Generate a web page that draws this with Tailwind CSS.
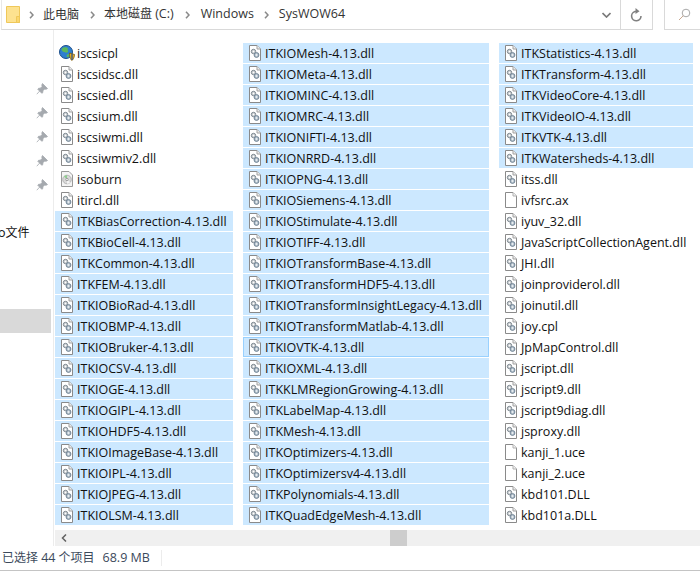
<!DOCTYPE html>
<html><head><meta charset="utf-8"><title>SysWOW64</title>
<script src="https://cdn.jsdelivr.net/npm/@tailwindcss/browser@4"></script>
</head>
<body class="bg-white overflow-hidden">
<svg class="hidden"><defs>
<symbol id="dll" viewBox="0 0 12 16"><path d="M.5.5H8L11.500 4V15.500H.5Z" fill="#fff" stroke="#8a8a8a"/><path d="M8 .5V4H11.500" fill="#eee" stroke="#a0a0a0"/><circle cx="4.500" cy="6.500" r="2.200" fill="#cfd3d6" stroke="#7d8890"/><circle cx="7.500" cy="10" r="2.400" fill="#b9c6d0" stroke="#6f8294"/><circle cx="4.500" cy="6.500" r=".7" fill="#fff"/><circle cx="7.500" cy="10" r=".8" fill="#fff"/></symbol>
<symbol id="blank" viewBox="0 0 12 16"><path d="M.5.500H8L11.500 4V15.500H.5Z" fill="#fff" stroke="#8a8a8a"/><path d="M8 .5V4H11.500" fill="#f2f2f2" stroke="#b0b0b0"/></symbol>
<symbol id="disc" viewBox="0 0 12 16"><path d="M.5.500H8L11.500 4V15.500H.5Z" fill="#f4f4f4" stroke="#9a9a9a"/><circle cx="6" cy="8.500" r="4.300" fill="#d8d8d8" stroke="#b5b5b5"/><path d="M6 8.500 3 5.500A4.300 4.300 0 0 1 6 4.200Z" fill="#8fce8f"/><path d="M6 8.500 9 11.500A4.300 4.300 0 0 1 6 12.800Z" fill="#f4f4f4"/><circle cx="6" cy="8.500" r="1.200" fill="#fff" stroke="#999"/></symbol>
<symbol id="globe" viewBox="0 0 16 16"><circle cx="7" cy="7" r="6.500" fill="#2f7fd0" stroke="#1d4f8a"/><path d="M3 3.500C5 1.500 8 2 9 3.500 8 5 9.500 5.500 9 7 7 8.500 6 7 4.500 7 3 6 2 5 3 3.500ZM8 9.500C10 9 11 10 10 11.500L8 12.500C7.500 11.500 7.500 10.500 8 9.500Z" fill="#5cb85c"/><path d="M10.500 8 15.500 9.500C15.500 13 13.500 15 13 15.500 12 15 10.500 13 10.500 8Z" fill="#f0b429" stroke="#7a5a10" stroke-width=".8"/><path d="M13 8.800V15" stroke="#27508f" stroke-width="1.300"/></symbol>
<symbol id="pin" viewBox="0 0 12 12"><path d="M6.500 .5 11.500 5.500 10 6.300 8.700 6 6.900 7.800 6.800 9.600 5.800 10.300 1.800 6.300 2.600 5.300 4.300 5.200 6.100 3.400 5.800 2ZM3.700 8 .8 11.200" fill="#a5a9ae" stroke="#a5a9ae" stroke-width=".8"/></symbol>
<symbol id="chev" viewBox="0 0 5 8"><path d="M1 .8 4 4 1 7.200" fill="none" stroke="#8a8a8a" stroke-width="1.600"/></symbol>
</defs></svg>
<div class="w-[700px] h-[571px] flex flex-col font-['Open_Sans','Noto_Sans_CJK_SC',sans-serif] text-[12px] text-[#111]">
  <header class="h-[30px] flex shrink-0">
    <div class="w-[620px] h-[30px] ml-px border-b border-r border-l border-l-[#e8e8e8] border-[#d9d9d9] flex items-center pl-[4px]">
      <svg class="w-[14px] h-[17px] mr-[9px]" viewBox="0 0 14 17"><path d="M.5.500H13.500V16.500H.5Z" fill="#fde290" stroke="#efc85a"/><path d="M10.500 10.500H13.500V16.500H10.500Z" fill="#fbd76e" stroke="#efc85a"/></svg>
      <nav class="flex items-center text-[#333]">
        <svg class="w-[5px] h-[8px] mr-[9px]"><use href="#chev"/></svg><span>此电脑</span>
        <svg class="w-[5px] h-[8px] ml-[11px] mr-[9px]"><use href="#chev"/></svg><span>本地磁盘 <span class="text-[12.5px]">(C:)</span></span>
        <svg class="w-[5px] h-[8px] ml-[11px] mr-[11px]"><use href="#chev"/></svg><span class="text-[12.5px]">Windows</span>
        <svg class="w-[5px] h-[8px] ml-[10px] mr-[10px]"><use href="#chev"/></svg><span class="text-[12.5px]">SysWOW64</span>
      </nav>
      <svg class="ml-auto mr-[9px] w-[9px] h-[6px]" viewBox="0 0 9 6"><path d="M.5 1 4.500 5 8.500 1" fill="none" stroke="#7a7a7a" stroke-width="1.700"/></svg>
    </div>
    <div class="w-[32px] h-[30px] border-b border-r border-[#d9d9d9] flex items-center justify-center">
      <svg class="w-[13px] h-[14px]" viewBox="0 0 13 14"><path d="M11 8A4.700 4.700 0 1 1 5 3.500H7" fill="none" stroke="#808080" stroke-width="1.600"/><path d="M5.500 0 9.500 3.300 5.500 6Z" fill="#808080"/></svg>
    </div>
    <div class="w-[11px]"></div>
    <div class="flex-1 h-[30px] border-b border-l border-[#d9d9d9] flex items-center pl-[13px]">
      <svg class="w-[13px] h-[13px]" viewBox="0 0 13 13"><circle cx="8" cy="5" r="3.800" fill="none" stroke="#a8a8a8"/><path d="M5.300 7.700 1 12" stroke="#c9a890"/></svg>
    </div>
  </header>
  <div class="flex flex-1 min-h-0">
    <aside class="w-[54px] shrink-0 border-r border-[#ececec] flex flex-col">
      <div class="flex flex-col items-end gap-[12px] pt-[53px] pr-[5px]">
        <svg class="w-[12px] h-[12px]"><use href="#pin"/></svg>
        <svg class="w-[12px] h-[12px]"><use href="#pin"/></svg>
        <svg class="w-[12px] h-[12px]"><use href="#pin"/></svg>
        <svg class="w-[12px] h-[12px]"><use href="#pin"/></svg>
        <svg class="w-[12px] h-[12px]"><use href="#pin"/></svg>
      </div>
      <div class="mt-[34px] -ml-[2px] whitespace-nowrap leading-[16px]"><span class="text-[12.5px]">o</span>文件</div>
      <div class="mt-[68px] w-[51px] h-[24px] bg-[#d9d9d9]"></div>
    </aside>
    <main class="flex-1 min-w-0 flex flex-col">
      <div class="flex-1 min-h-0 flex gap-[10px] pl-px pt-[13px] text-[12.5px] leading-[22px] overflow-hidden">
        <ul class="w-[178px] flex flex-col gap-px">
          <li class="h-[20px] flex items-start gap-[2px] pl-[4px]"><svg class="mt-[2px] w-[16px] h-[16px]"><use href="#globe"/></svg>iscsicpl</li>
          <li class="h-[20px] flex items-start gap-[4px] pl-[6px]"><svg class="mt-[2px] w-[12px] h-[16px]"><use href="#dll"/></svg>iscsidsc.dll</li>
          <li class="h-[20px] flex items-start gap-[4px] pl-[6px]"><svg class="mt-[2px] w-[12px] h-[16px]"><use href="#dll"/></svg>iscsied.dll</li>
          <li class="h-[20px] flex items-start gap-[4px] pl-[6px]"><svg class="mt-[2px] w-[12px] h-[16px]"><use href="#dll"/></svg>iscsium.dll</li>
          <li class="h-[20px] flex items-start gap-[4px] pl-[6px]"><svg class="mt-[2px] w-[12px] h-[16px]"><use href="#dll"/></svg>iscsiwmi.dll</li>
          <li class="h-[20px] flex items-start gap-[4px] pl-[6px]"><svg class="mt-[2px] w-[12px] h-[16px]"><use href="#dll"/></svg>iscsiwmiv2.dll</li>
          <li class="h-[20px] flex items-start gap-[4px] pl-[6px]"><svg class="mt-[2px] w-[12px] h-[16px]"><use href="#disc"/></svg>isoburn</li>
          <li class="h-[20px] flex items-start gap-[4px] pl-[6px]"><svg class="mt-[2px] w-[12px] h-[16px]"><use href="#dll"/></svg>itircl.dll</li>
          <li class="h-[20px] flex items-start gap-[4px] pl-[6px] bg-[#cce8ff]"><svg class="mt-[2px] w-[12px] h-[16px]"><use href="#dll"/></svg>ITKBiasCorrection-4.13.dll</li>
          <li class="h-[20px] flex items-start gap-[4px] pl-[6px] bg-[#cce8ff]"><svg class="mt-[2px] w-[12px] h-[16px]"><use href="#dll"/></svg>ITKBioCell-4.13.dll</li>
          <li class="h-[20px] flex items-start gap-[4px] pl-[6px] bg-[#cce8ff]"><svg class="mt-[2px] w-[12px] h-[16px]"><use href="#dll"/></svg>ITKCommon-4.13.dll</li>
          <li class="h-[20px] flex items-start gap-[4px] pl-[6px] bg-[#cce8ff]"><svg class="mt-[2px] w-[12px] h-[16px]"><use href="#dll"/></svg>ITKFEM-4.13.dll</li>
          <li class="h-[20px] flex items-start gap-[4px] pl-[6px] bg-[#cce8ff]"><svg class="mt-[2px] w-[12px] h-[16px]"><use href="#dll"/></svg>ITKIOBioRad-4.13.dll</li>
          <li class="h-[20px] flex items-start gap-[4px] pl-[6px] bg-[#cce8ff]"><svg class="mt-[2px] w-[12px] h-[16px]"><use href="#dll"/></svg>ITKIOBMP-4.13.dll</li>
          <li class="h-[20px] flex items-start gap-[4px] pl-[6px] bg-[#cce8ff]"><svg class="mt-[2px] w-[12px] h-[16px]"><use href="#dll"/></svg>ITKIOBruker-4.13.dll</li>
          <li class="h-[20px] flex items-start gap-[4px] pl-[6px] bg-[#cce8ff]"><svg class="mt-[2px] w-[12px] h-[16px]"><use href="#dll"/></svg>ITKIOCSV-4.13.dll</li>
          <li class="h-[20px] flex items-start gap-[4px] pl-[6px] bg-[#cce8ff]"><svg class="mt-[2px] w-[12px] h-[16px]"><use href="#dll"/></svg>ITKIOGE-4.13.dll</li>
          <li class="h-[20px] flex items-start gap-[4px] pl-[6px] bg-[#cce8ff]"><svg class="mt-[2px] w-[12px] h-[16px]"><use href="#dll"/></svg>ITKIOGIPL-4.13.dll</li>
          <li class="h-[20px] flex items-start gap-[4px] pl-[6px] bg-[#cce8ff]"><svg class="mt-[2px] w-[12px] h-[16px]"><use href="#dll"/></svg>ITKIOHDF5-4.13.dll</li>
          <li class="h-[20px] flex items-start gap-[4px] pl-[6px] bg-[#cce8ff]"><svg class="mt-[2px] w-[12px] h-[16px]"><use href="#dll"/></svg>ITKIOImageBase-4.13.dll</li>
          <li class="h-[20px] flex items-start gap-[4px] pl-[6px] bg-[#cce8ff]"><svg class="mt-[2px] w-[12px] h-[16px]"><use href="#dll"/></svg>ITKIOIPL-4.13.dll</li>
          <li class="h-[20px] flex items-start gap-[4px] pl-[6px] bg-[#cce8ff]"><svg class="mt-[2px] w-[12px] h-[16px]"><use href="#dll"/></svg>ITKIOJPEG-4.13.dll</li>
          <li class="h-[20px] flex items-start gap-[4px] pl-[6px] bg-[#cce8ff]"><svg class="mt-[2px] w-[12px] h-[16px]"><use href="#dll"/></svg>ITKIOLSM-4.13.dll</li>
        </ul>
        <ul class="w-[246px] flex flex-col gap-px">
          <li class="h-[20px] flex items-start gap-[4px] pl-[6px] bg-[#cce8ff]"><svg class="mt-[2px] w-[12px] h-[16px]"><use href="#dll"/></svg>ITKIOMesh-4.13.dll</li>
          <li class="h-[20px] flex items-start gap-[4px] pl-[6px] bg-[#cce8ff]"><svg class="mt-[2px] w-[12px] h-[16px]"><use href="#dll"/></svg>ITKIOMeta-4.13.dll</li>
          <li class="h-[20px] flex items-start gap-[4px] pl-[6px] bg-[#cce8ff]"><svg class="mt-[2px] w-[12px] h-[16px]"><use href="#dll"/></svg>ITKIOMINC-4.13.dll</li>
          <li class="h-[20px] flex items-start gap-[4px] pl-[6px] bg-[#cce8ff]"><svg class="mt-[2px] w-[12px] h-[16px]"><use href="#dll"/></svg>ITKIOMRC-4.13.dll</li>
          <li class="h-[20px] flex items-start gap-[4px] pl-[6px] bg-[#cce8ff]"><svg class="mt-[2px] w-[12px] h-[16px]"><use href="#dll"/></svg>ITKIONIFTI-4.13.dll</li>
          <li class="h-[20px] flex items-start gap-[4px] pl-[6px] bg-[#cce8ff]"><svg class="mt-[2px] w-[12px] h-[16px]"><use href="#dll"/></svg>ITKIONRRD-4.13.dll</li>
          <li class="h-[20px] flex items-start gap-[4px] pl-[6px] bg-[#cce8ff]"><svg class="mt-[2px] w-[12px] h-[16px]"><use href="#dll"/></svg>ITKIOPNG-4.13.dll</li>
          <li class="h-[20px] flex items-start gap-[4px] pl-[6px] bg-[#cce8ff]"><svg class="mt-[2px] w-[12px] h-[16px]"><use href="#dll"/></svg>ITKIOSiemens-4.13.dll</li>
          <li class="h-[20px] flex items-start gap-[4px] pl-[6px] bg-[#cce8ff]"><svg class="mt-[2px] w-[12px] h-[16px]"><use href="#dll"/></svg>ITKIOStimulate-4.13.dll</li>
          <li class="h-[20px] flex items-start gap-[4px] pl-[6px] bg-[#cce8ff]"><svg class="mt-[2px] w-[12px] h-[16px]"><use href="#dll"/></svg>ITKIOTIFF-4.13.dll</li>
          <li class="h-[20px] flex items-start gap-[4px] pl-[6px] bg-[#cce8ff]"><svg class="mt-[2px] w-[12px] h-[16px]"><use href="#dll"/></svg>ITKIOTransformBase-4.13.dll</li>
          <li class="h-[20px] flex items-start gap-[4px] pl-[6px] bg-[#cce8ff]"><svg class="mt-[2px] w-[12px] h-[16px]"><use href="#dll"/></svg>ITKIOTransformHDF5-4.13.dll</li>
          <li class="h-[20px] flex items-start gap-[4px] pl-[6px] bg-[#cce8ff]"><svg class="mt-[2px] w-[12px] h-[16px]"><use href="#dll"/></svg>ITKIOTransformInsightLegacy-4.13.dll</li>
          <li class="h-[20px] flex items-start gap-[4px] pl-[6px] bg-[#cce8ff]"><svg class="mt-[2px] w-[12px] h-[16px]"><use href="#dll"/></svg>ITKIOTransformMatlab-4.13.dll</li>
          <li class="h-[20px] flex items-start gap-[4px] pl-[5px] bg-[#cce8ff] border border-[#99d1ff] leading-[20px]"><svg class="mt-px w-[12px] h-[16px]"><use href="#dll"/></svg>ITKIOVTK-4.13.dll</li>
          <li class="h-[20px] flex items-start gap-[4px] pl-[6px] bg-[#cce8ff]"><svg class="mt-[2px] w-[12px] h-[16px]"><use href="#dll"/></svg>ITKIOXML-4.13.dll</li>
          <li class="h-[20px] flex items-start gap-[4px] pl-[6px] bg-[#cce8ff]"><svg class="mt-[2px] w-[12px] h-[16px]"><use href="#dll"/></svg>ITKKLMRegionGrowing-4.13.dll</li>
          <li class="h-[20px] flex items-start gap-[4px] pl-[6px] bg-[#cce8ff]"><svg class="mt-[2px] w-[12px] h-[16px]"><use href="#dll"/></svg>ITKLabelMap-4.13.dll</li>
          <li class="h-[20px] flex items-start gap-[4px] pl-[6px] bg-[#cce8ff]"><svg class="mt-[2px] w-[12px] h-[16px]"><use href="#dll"/></svg>ITKMesh-4.13.dll</li>
          <li class="h-[20px] flex items-start gap-[4px] pl-[6px] bg-[#cce8ff]"><svg class="mt-[2px] w-[12px] h-[16px]"><use href="#dll"/></svg>ITKOptimizers-4.13.dll</li>
          <li class="h-[20px] flex items-start gap-[4px] pl-[6px] bg-[#cce8ff]"><svg class="mt-[2px] w-[12px] h-[16px]"><use href="#dll"/></svg>ITKOptimizersv4-4.13.dll</li>
          <li class="h-[20px] flex items-start gap-[4px] pl-[6px] bg-[#cce8ff]"><svg class="mt-[2px] w-[12px] h-[16px]"><use href="#dll"/></svg>ITKPolynomials-4.13.dll</li>
          <li class="h-[20px] flex items-start gap-[4px] pl-[6px] bg-[#cce8ff]"><svg class="mt-[2px] w-[12px] h-[16px]"><use href="#dll"/></svg>ITKQuadEdgeMesh-4.13.dll</li>
        </ul>
        <ul class="w-[194px] flex flex-col gap-px">
          <li class="h-[20px] flex items-start gap-[4px] pl-[6px] bg-[#cce8ff]"><svg class="mt-[2px] w-[12px] h-[16px]"><use href="#dll"/></svg>ITKStatistics-4.13.dll</li>
          <li class="h-[20px] flex items-start gap-[4px] pl-[6px] bg-[#cce8ff]"><svg class="mt-[2px] w-[12px] h-[16px]"><use href="#dll"/></svg>ITKTransform-4.13.dll</li>
          <li class="h-[20px] flex items-start gap-[4px] pl-[6px] bg-[#cce8ff]"><svg class="mt-[2px] w-[12px] h-[16px]"><use href="#dll"/></svg>ITKVideoCore-4.13.dll</li>
          <li class="h-[20px] flex items-start gap-[4px] pl-[6px] bg-[#cce8ff]"><svg class="mt-[2px] w-[12px] h-[16px]"><use href="#dll"/></svg>ITKVideoIO-4.13.dll</li>
          <li class="h-[20px] flex items-start gap-[4px] pl-[6px] bg-[#cce8ff]"><svg class="mt-[2px] w-[12px] h-[16px]"><use href="#dll"/></svg>ITKVTK-4.13.dll</li>
          <li class="h-[20px] flex items-start gap-[4px] pl-[6px] bg-[#cce8ff]"><svg class="mt-[2px] w-[12px] h-[16px]"><use href="#dll"/></svg>ITKWatersheds-4.13.dll</li>
          <li class="h-[20px] flex items-start gap-[4px] pl-[6px]"><svg class="mt-[2px] w-[12px] h-[16px]"><use href="#dll"/></svg>itss.dll</li>
          <li class="h-[20px] flex items-start gap-[4px] pl-[6px]"><svg class="mt-[2px] w-[12px] h-[16px]"><use href="#blank"/></svg>ivfsrc.ax</li>
          <li class="h-[20px] flex items-start gap-[4px] pl-[6px]"><svg class="mt-[2px] w-[12px] h-[16px]"><use href="#dll"/></svg>iyuv_32.dll</li>
          <li class="h-[20px] flex items-start gap-[4px] pl-[6px]"><svg class="mt-[2px] w-[12px] h-[16px]"><use href="#dll"/></svg>JavaScriptCollectionAgent.dll</li>
          <li class="h-[20px] flex items-start gap-[4px] pl-[6px]"><svg class="mt-[2px] w-[12px] h-[16px]"><use href="#dll"/></svg>JHI.dll</li>
          <li class="h-[20px] flex items-start gap-[4px] pl-[6px]"><svg class="mt-[2px] w-[12px] h-[16px]"><use href="#dll"/></svg>joinproviderol.dll</li>
          <li class="h-[20px] flex items-start gap-[4px] pl-[6px]"><svg class="mt-[2px] w-[12px] h-[16px]"><use href="#dll"/></svg>joinutil.dll</li>
          <li class="h-[20px] flex items-start gap-[4px] pl-[6px]"><svg class="mt-[2px] w-[12px] h-[16px]"><use href="#dll"/></svg>joy.cpl</li>
          <li class="h-[20px] flex items-start gap-[4px] pl-[6px]"><svg class="mt-[2px] w-[12px] h-[16px]"><use href="#dll"/></svg>JpMapControl.dll</li>
          <li class="h-[20px] flex items-start gap-[4px] pl-[6px]"><svg class="mt-[2px] w-[12px] h-[16px]"><use href="#dll"/></svg>jscript.dll</li>
          <li class="h-[20px] flex items-start gap-[4px] pl-[6px]"><svg class="mt-[2px] w-[12px] h-[16px]"><use href="#dll"/></svg>jscript9.dll</li>
          <li class="h-[20px] flex items-start gap-[4px] pl-[6px]"><svg class="mt-[2px] w-[12px] h-[16px]"><use href="#dll"/></svg>jscript9diag.dll</li>
          <li class="h-[20px] flex items-start gap-[4px] pl-[6px]"><svg class="mt-[2px] w-[12px] h-[16px]"><use href="#dll"/></svg>jsproxy.dll</li>
          <li class="h-[20px] flex items-start gap-[4px] pl-[6px]"><svg class="mt-[2px] w-[12px] h-[16px]"><use href="#blank"/></svg>kanji_1.uce</li>
          <li class="h-[20px] flex items-start gap-[4px] pl-[6px]"><svg class="mt-[2px] w-[12px] h-[16px]"><use href="#blank"/></svg>kanji_2.uce</li>
          <li class="h-[20px] flex items-start gap-[4px] pl-[6px]"><svg class="mt-[2px] w-[12px] h-[16px]"><use href="#dll"/></svg>kbd101.DLL</li>
          <li class="h-[20px] flex items-start gap-[4px] pl-[6px]"><svg class="mt-[2px] w-[12px] h-[16px]"><use href="#dll"/></svg>kbd101a.DLL</li>
        </ul>
      </div>
      <div class="h-[16px] ml-px bg-[#f0f0f0] flex items-center shrink-0">
        <svg class="ml-[6px] w-[6px] h-[8px]" viewBox="0 0 6 8"><path d="M5 .5 1.500 4 5 7.500" fill="none" stroke="#606060" stroke-width="1.500"/></svg>
        <div class="ml-[323px] w-[17px] h-[16px] bg-[#cdcdcd]"></div>
      </div>
    </main>
  </div>
  <footer class="h-[25px] shrink-0 border-b border-[#c4c4c4] flex items-center text-[#3c4a5c] pl-[2px]">
    <span>已选择 <span class="text-[12.5px]">44</span> 个项目</span><span class="ml-[8px] text-[12.5px]">68.9 MB</span>
    <span class="ml-[11px] w-px h-[16px] bg-[#ececec]"></span>
  </footer>
</div>
</body></html>
